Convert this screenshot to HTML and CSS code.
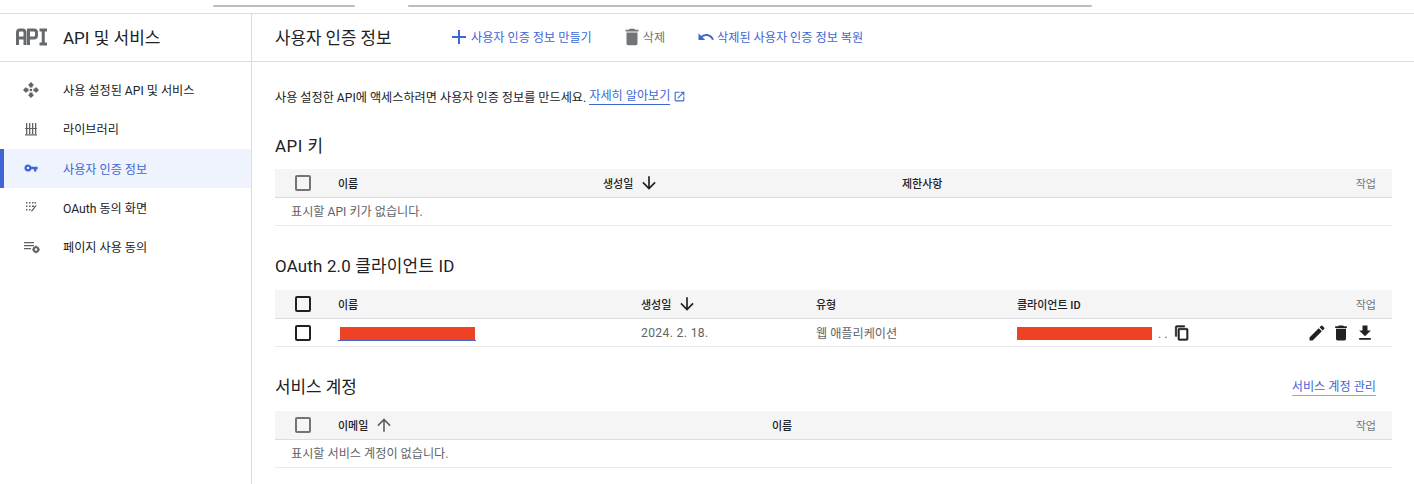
FILE: index.html
```html
<!DOCTYPE html>
<html lang="ko">
<head>
<meta charset="utf-8">
<title>사용자 인증 정보</title>
<link rel="stylesheet" href="styles.css">
</head>
<body>
<div class="topbar">
  <div class="field field-a"></div>
  <div class="field field-b"></div>
</div>
<div class="shell">
  <aside class="side">
    <div class="side-head">
      <svg class="api-logo" width="32" height="18" viewBox="0 0 32 18"><path d="M1.500 17V4.500Q1.500 2 4 2H6.500Q9 2 9 4.500V17M1.500 10H9M12.500 17V2H18Q20.500 2 20.500 4.500V7.500Q20.500 10 18 10H12.500M23.500 2H31M27.250 2V16M23.500 16H31" fill="none" stroke="#666a6e" stroke-width="3"/></svg>
      <span class="side-title">API 및 서비스</span>
    </div>
    <nav class="nav">
      <a class="nav-item"><svg class="nav-ic" width="18" height="18" viewBox="0 0 18 18" fill="#5f6368"><path d="M9 1l3 3-1.500 1v1.500h-3V5L6 4zM9 17l-3-3 1.500-1v-1.500h3V13l1.500 1zM1 9l3-3 1 1.500h1.500v3H5L4 12zM17 9l-3 3-1-1.500h-1.500v-3H13L14 6z"/><circle cx="9" cy="9" r="1.300"/></svg><span>사용 설정된 API 및 서비스</span></a>
      <a class="nav-item"><svg class="nav-ic" width="18" height="18" viewBox="0 0 18 18" fill="#5f6368"><path d="M4 3h1.300v5H4zM7 3h1.300v5H7zM10 3h1.300v5H10zM13 3h1.300v5H13zM3 8h12v1H3zM4 9h1.300v5H4zM7 9h1.300v5H7zM10 9h1.300v5H10zM13 9h1.300v5H13zM3 14.300h12v1.200H3z"/></svg><span>라이브러리</span></a>
      <a class="nav-item nav-active"><svg class="nav-ic" width="18" height="18" viewBox="-3 -3 30 30" fill="#3f66d4"><path d="M12.650 10C11.830 7.670 9.610 6 7 6c-3.310 0-6 2.690-6 6s2.690 6 6 6c2.610 0 4.830-1.670 5.650-4H17v4h4v-4h2v-4H12.650zM7 14c-1.100 0-2-.9-2-2s.9-2 2-2 2 .9 2 2-.9 2-2 2z"/></svg><span>사용자 인증 정보</span></a>
      <a class="nav-item"><svg class="nav-ic" width="18" height="18" viewBox="0 0 18 18" fill="#5f6368"><path d="M4 4h1.500v1.500H4zM7 4h1.500v1.500H7zM10 4h1.500v1.500H10zM12.500 4H14v1.500h-1.500zM4 7.500h1.500V9H4zM7 7.500h1.500V9H7zM10 7.500h2V9h-2zM4 11h1.500v1.500H4zM7 11h1.500v1.500H7zM13.600 7l1 .8-4.600 6-1-.8z"/></svg><span>OAuth 동의 화면</span></a>
      <a class="nav-item"><svg class="nav-ic" width="18" height="18" viewBox="0 0 18 18" fill="#5f6368"><path d="M2 4h10v1.200H2zM2 7h10v1.200H2zM2 10h7v1.200H2z"/><circle cx="14" cy="11.500" r="2.300" fill="none" stroke="#5f6368" stroke-width="2"/><path d="M13.200 7.800h1.600v1.400h-1.600zM13.200 13.800h1.600v1.400h-1.600zM10.300 10.700h1.400v1.600h-1.400zM16.300 10.700h1.400v1.600h-1.400z"/></svg><span>페이지 사용 동의</span></a>
    </nav>
  </aside>
  <main class="main">
    <header class="main-head">
      <h1 class="page-title">사용자 인증 정보</h1>
      <a class="action"><svg width="24" height="24" viewBox="0 0 24 24" fill="#3f66d4"><path d="M19 13h-6v6h-2v-6H5v-2h6V5h2v6h6z"/></svg>사용자 인증 정보 만들기</a>
      <a class="action action-delete"><svg width="22" height="22" viewBox="0 0 24 24" fill="#70757a"><path d="M6 19c0 1.100.9 2 2 2h8c1.100 0 2-.9 2-2V7H6zM19 4h-3.500l-1-1h-5l-1 1H5v2h14z"/></svg>삭제</a>
      <a class="action action-restore"><svg width="18" height="18" viewBox="0 0 24 24" fill="#3f66d4"><path d="M12.500 8c-2.650 0-5.050.99-6.900 2.600L2 7v9h9l-3.620-3.620c1.390-1.160 3.160-1.880 5.120-1.880 3.540 0 6.550 2.310 7.600 5.500l2.370-.78C21.080 11.030 17.150 8 12.500 8z"/></svg>삭제된 사용자 인증 정보 복원</a>
    </header>
    <div class="content">
      <p class="intro">사용 설정한 API에 액세스하려면 사용자 인증 정보를 만드세요. <a class="link">자세히 알아보기</a><svg class="ext" width="13" height="13" viewBox="0 0 24 24" fill="#3f66d4"><path d="M19 19H5V5h7V3H5a2 2 0 0 0-2 2v14a2 2 0 0 0 2 2h14a2 2 0 0 0 2-2v-7h-2zM14 3v2h3.590l-9.830 9.830 1.410 1.410L19 6.410V10h2V3z"/></svg></p>

      <section class="sec sec-api">
        <h2 class="sec-title">API 키</h2>
        <div class="row head cols-api">
          <span class="check check-dim"></span><span>이름</span>
          <span class="sort">생성일<svg width="20" height="20" viewBox="0 0 24 24" fill="#202124"><path d="M20 12l-1.410-1.410L13 16.170V4h-2v12.170l-5.580-5.590L4 12l8 8z"/></svg></span>
          <span>제한사항</span><span class="act-label">작업</span>
        </div>
        <div class="row empty">표시할 API 키가 없습니다.</div>
      </section>

      <section class="sec sec-oauth">
        <h2 class="sec-title">OAuth 2.0 클라이언트 ID</h2>
        <div class="row head cols-oauth">
          <span class="check"></span><span>이름</span>
          <span class="sort">생성일<svg width="20" height="20" viewBox="0 0 24 24" fill="#202124"><path d="M20 12l-1.410-1.410L13 16.170V4h-2v12.170l-5.580-5.590L4 12l8 8z"/></svg></span>
          <span>유형</span><span>클라이언트 ID</span><span class="act-label">작업</span>
        </div>
        <div class="row body cols-oauth">
          <span class="check"></span>
          <span class="name-cell"><span class="redact redact-name"></span></span>
          <span class="date">2024. 2. 18.</span>
          <span>웹 애플리케이션</span>
          <span class="client-cell"><span class="redact redact-id"></span><span class="dots">. .</span><svg class="copy" width="16" height="16" viewBox="0 0 24 24" fill="#202124" stroke="#202124" stroke-width="1"><path d="M16 1H4a2 2 0 0 0-2 2v14h2V3h12zm3 4H8a2 2 0 0 0-2 2v14a2 2 0 0 0 2 2h11a2 2 0 0 0 2-2V7a2 2 0 0 0-2-2zm0 16H8V7h11z"/></svg></span>
          <span class="icons">
            <svg width="20" height="20" viewBox="0 0 24 24" fill="#202124"><path d="M3 17.250V21h3.750L17.810 9.940l-3.750-3.750zM20.710 7.040a1 1 0 0 0 0-1.410l-2.340-2.340a1 1 0 0 0-1.410 0l-1.830 1.830 3.750 3.750z"/></svg>
            <svg width="20" height="20" viewBox="0 0 24 24" fill="#202124"><path d="M6 19c0 1.100.9 2 2 2h8c1.100 0 2-.9 2-2V7H6zM19 4h-3.500l-1-1h-5l-1 1H5v2h14z"/></svg>
            <svg width="20" height="20" viewBox="0 0 24 24" fill="#202124"><path d="M19 9h-4V3H9v6H5l7 7zM5 18v2h14v-2z"/></svg>
          </span>
        </div>
      </section>

      <section class="sec sec-svc">
        <div class="sec-bar">
          <h2 class="sec-title">서비스 계정</h2>
          <a class="link link-soft">서비스 계정 관리</a>
        </div>
        <div class="row head cols-svc">
          <span class="check check-dim"></span>
          <span class="sort">이메일<svg width="20" height="20" viewBox="0 0 24 24" fill="#5f6368"><path d="M4 12l1.410 1.410L11 7.830V20h2V7.830l5.580 5.590L20 12l-8-8z"/></svg></span>
          <span>이름</span><span class="act-label">작업</span>
        </div>
        <div class="row empty">표시할 서비스 계정이 없습니다.</div>
      </section>
    </div>
  </main>
</div>
</body>
</html>
```
FILE: styles.css
```css
* { box-sizing: border-box; }
html, body { margin: 0; height: 484px; overflow: hidden; background: #fff; }
body { font-family: Roboto, "Noto Sans CJK KR", sans-serif; color: #202124; font-size: 12.150px; }
svg { display: block; flex: none; }
h1, h2, p { margin: 0; font-weight: 400; }

.topbar { height: 14px; border-bottom: 1px solid #dadce0; display: flex; padding-left: 213px; gap: 53px; }
.field { height: 2px; margin-top: 5px; background: #bdbdbd; border-radius: 1px; }
.field-a { width: 142px; }
.field-b { width: 684px; }

.shell { display: flex; height: 470px; }
.side { width: 252px; flex: none; border-right: 1px solid #dadce0; }
.side-head { height: 48px; border-bottom: 1px solid #dadce0; display: flex; align-items: center; padding: 0 0 2px 16px; gap: 15px; }
.side-title { font-size: 17px; }
.nav { padding-top: 8px; }
.nav-item { height: 39.250px; display: flex; align-items: center; padding-left: 22px; gap: 23px; }
.nav-active { background: #eef3fd; color: #3f66d4; box-shadow: inset 4px 0 0 #3f66d4; }

.main { flex: 1; min-width: 0; }
.main-head { height: 48px; border-bottom: 1px solid #dadce0; display: flex; align-items: center; padding: 0 0 2px 23px; }
.page-title { font-size: 16.800px; width: 172px; }
.action { display: flex; align-items: center; color: #3f66d4; }
.action-delete { color: #70757a; margin-left: 29px; }
.action-restore { margin-left: 32px; gap: 2px; }

.content { padding: 0 22px 0 23px; }
.intro { display: flex; align-items: center; height: 20px; margin-top: 24px; white-space: pre-wrap; }
.link { color: #3f66d4; border-bottom: 1px solid #3f66d4; line-height: 16px; }
.link-soft { border-bottom-color: #8fa8ea; }
.ext { margin-left: 3px; }

.sec-title { font-size: 16.900px; line-height: 24px; }
.sec-api { margin-top: 28px; }
.sec-oauth { margin-top: 28px; }
.sec-svc { margin-top: 28px; }
.sec-api .sec-title { letter-spacing: .5px; margin-bottom: 11px; }
.sec-oauth .sec-title { letter-spacing: .2px; margin-bottom: 12px; }
.sec-bar { display: flex; justify-content: space-between; align-items: center; margin-bottom: 12px; padding-right: 16px; }

.row { display: grid; align-items: center; }
.head { height: 29px; background: #f5f5f5; border-bottom: 1px solid #dadce0; font-size: 11px; font-weight: 500; }
.body { height: 28px; border-bottom: 1px solid #e8eaed; color: #5f6368; }
.empty { display: flex; height: 28px; border-bottom: 1px solid #e8eaed; padding: 0 0 2px 16px; color: #5f6368; }
.cols-api { grid-template-columns: 63px 265px 299px 1fr 76px; }
.cols-oauth { grid-template-columns: 63px 303px 175px 201px 1fr 76px; }
.cols-svc { grid-template-columns: 63px 434px 1fr 76px; }

.check { width: 16px; height: 16px; margin-left: 20px; border: 2px solid #202124; border-radius: 2px; }
.check-dim { border-color: #70757a; }
.sort { display: flex; align-items: center; gap: 6px; }
.act-label { text-align: right; color: #70757a; font-weight: 400; padding-right: 16px; }
.date { letter-spacing: .35px; }

.name-cell { display: block; height: 17px; width: 138px; padding-top: 3px; border-bottom: 1px solid #3f66d4; }
.redact { display: block; background: #ef4123; height: 13px; }
.redact-name { width: 135px; margin-left: 2px; }
.redact-id { width: 135px; margin-top: 1px; }
.client-cell { display: flex; align-items: center; }
.dots { margin-left: 6px; margin-right: 7px; padding-top: 2px; }
.icons { display: flex; justify-content: flex-end; gap: 4px; padding-right: 17px; grid-column: 6; white-space: nowrap; margin-left: -60px; }
```
